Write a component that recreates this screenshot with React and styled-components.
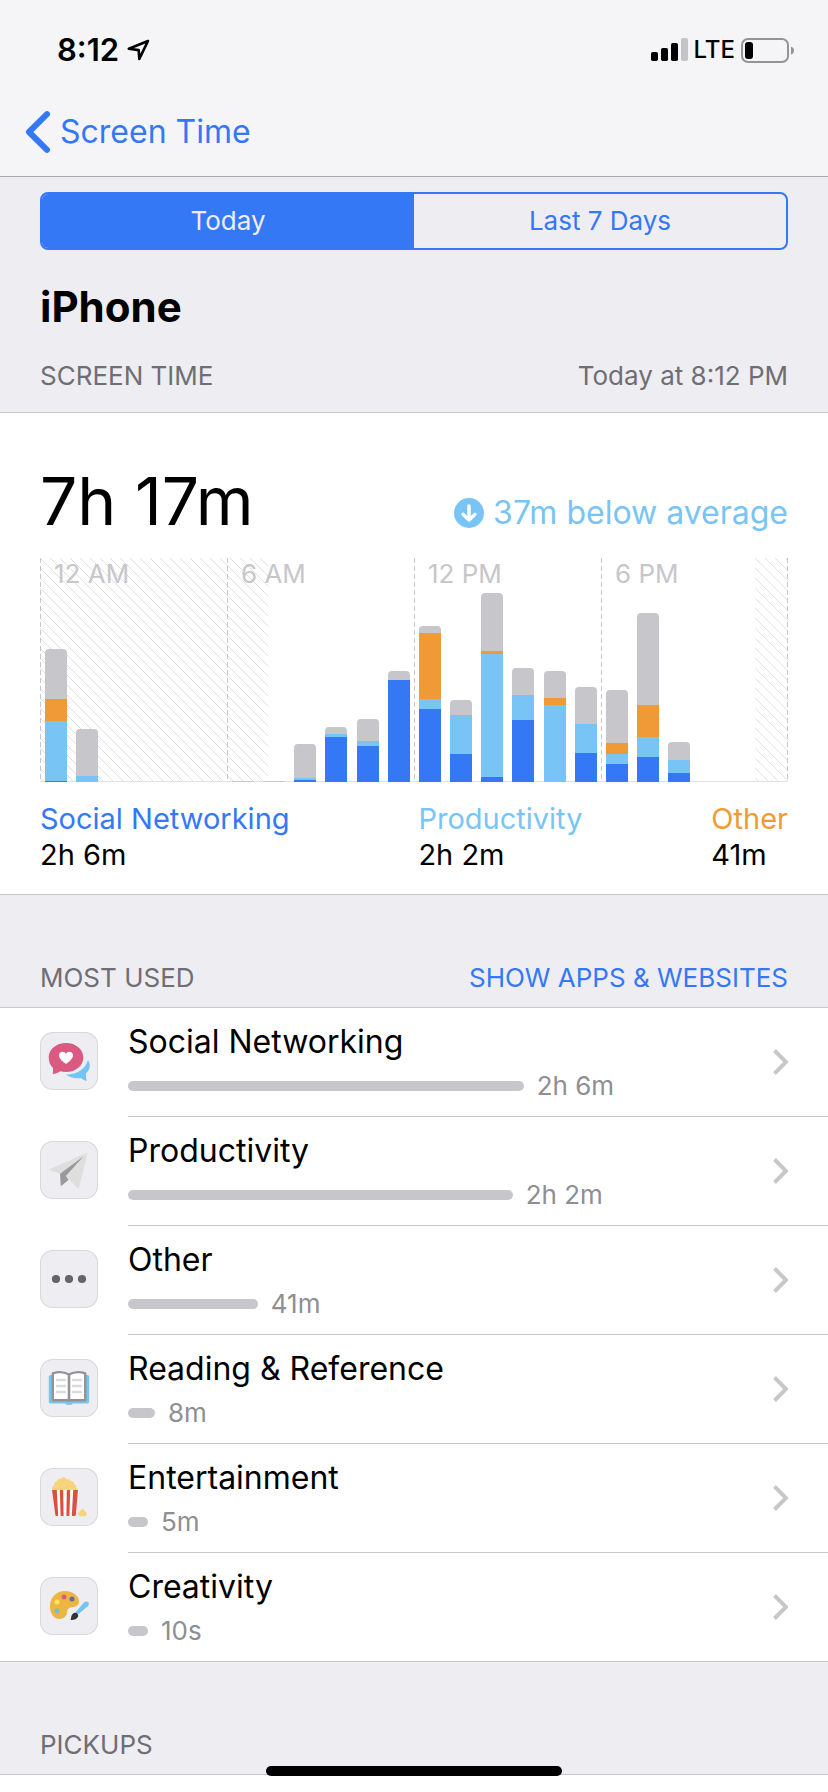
import React, { useState } from "react";
import styled, { createGlobalStyle } from "styled-components";

const color = {
  blue: "#3478f6",
  sky: "#78c5f5",
  orange: "#f09a37",
  gray: "#c7c6cb",
  line: "#c8c7cc",
  group: "#eeedf2",
  label: "#6f6e74",
  detail: "#8e8e93",
};

const GlobalStyle = createGlobalStyle`
  *, *::before, *::after { box-sizing: border-box; }
  body {
    margin: 0;
    background: #fff;
    color: #000;
    font-family: Inter, "Liberation Sans", sans-serif;
    font-size: 26px;
    line-height: 32px;
  }
  h1, h2, p, ul, dl, dd { margin: 0; padding: 0; }
  ul { list-style: none; }
  button { font: inherit; border: 0; background: none; padding: 0; cursor: pointer; }
  a { color: inherit; text-decoration: none; }
  svg { display: block; flex: none; }
`;

const Header = styled.header`
  background: #f5f5f7;
  border-bottom: 1px solid #a9a9ae;
`;

const StatusBar = styled.div`
  display: flex;
  align-items: center;
  justify-content: space-between;
  height: 88px;
  padding: 12px 34px 0 57px;
`;

const StatusGroup = styled.div`
  display: flex;
  align-items: center;
  gap: ${(p) => p.$gap}px;
`;

const Clock = styled.span`
  font-size: 31px;
  font-weight: 600;
`;

const Carrier = styled.span`
  font-size: 24px;
  font-weight: 500;
`;

const NavBar = styled.nav`
  display: flex;
  align-items: center;
  height: 88px;
  padding: 0 25px;
`;

const BackLink = styled.a`
  display: flex;
  align-items: center;
  gap: 9px;
  color: ${color.blue};
  font-size: 32px;
  line-height: 44px;
`;

const Intro = styled.section`
  padding: 15px 40px 20px;
  background: ${color.group};
  border-bottom: 1px solid ${color.line};
`;

const Segmented = styled.div`
  display: grid;
  grid-template-columns: 1fr 1fr;
  height: 58px;
  border: 2px solid ${color.blue};
  border-radius: 8px;
  overflow: hidden;
`;

const Segment = styled.button`
  color: ${(p) => (p.$active ? color.group : color.blue)};
  background: ${(p) => (p.$active ? color.blue : "transparent")};
`;

const DeviceName = styled.h1`
  margin-top: 31px;
  font-size: 42px;
  line-height: 52px;
  font-weight: 700;
`;

const LabelRow = styled.div`
  display: flex;
  justify-content: space-between;
  color: ${color.label};
`;

const IntroLabels = styled(LabelRow)`
  margin-top: 27px;
`;

const GroupHeader = styled(LabelRow)`
  padding: 67px 40px 13px;
  background: ${color.group};
  border-bottom: 1px solid ${color.line};
`;

const Label = styled.h2`
  font-size: 26px;
  font-weight: 400;
  text-transform: uppercase;
`;

const LabelButton = styled.button`
  color: ${color.blue};
  text-transform: uppercase;
`;

const Summary = styled.section`
  padding: 52px 40px 21px;
  border-bottom: 1px solid ${color.line};
`;

const Totals = styled.div`
  display: flex;
  align-items: flex-end;
  justify-content: space-between;
`;

const Total = styled.p`
  font-size: 66px;
  line-height: 72px;
`;

const Average = styled.p`
  display: flex;
  align-items: center;
  gap: 9px;
  color: ${color.sky};
  font-size: 32px;
  line-height: 48px;
`;

const Chart = styled.div`
  display: grid;
  height: 224px;
  margin-top: 21px;
  border-bottom: 1px solid #e2e2e5;

  > * { grid-area: 1 / 1; }
`;

const Hatch = styled.svg`
  width: 100%;
  height: 100%;
`;

const Periods = styled.div`
  display: grid;
  grid-template-columns: repeat(4, 1fr);
`;

const dashes = `repeating-linear-gradient(${color.gray} 0 5px, transparent 5px 8px)`;

const Period = styled.div`
  padding: 0 14px;
  color: ${color.gray};
  background: ${dashes} left / 1px 100% no-repeat;

  &:last-child {
    background: ${dashes} left / 1px 100% no-repeat, ${dashes} right / 1px 100% no-repeat;
  }
`;

const Hours = styled.div`
  display: grid;
  grid-template-columns: repeat(24, 1fr);
  align-items: end;
  margin-bottom: -1px;
`;

const Bar = styled.div`
  width: 22px;
  margin-left: 5px;
  border-radius: 4px 4px 0 0;
  overflow: hidden;
`;

const Part = styled.div`
  background: ${(p) => p.$fill};
`;

const Legend = styled.dl`
  display: flex;
  justify-content: space-between;
  margin-top: 19px;
  font-size: 29px;
  line-height: 36px;
`;

const LegendName = styled.dt`
  color: ${(p) => p.$fill};
`;

const List = styled.ul`
  background: #fff;
  border-bottom: 1px solid ${color.line};
`;

const Row = styled.a`
  display: flex;
  align-items: flex-start;
  gap: 30px;
  padding-left: 40px;
`;

const Tile = styled.span`
  flex: none;
  width: 58px;
  height: 58px;
  margin-top: 24px;
  border-radius: 13px;
  background: ${color.group};
  box-shadow: inset 0 0 0 1px #d9d9dc;
`;

const RowBody = styled.div`
  flex: 1;
  display: flex;
  align-items: center;
  gap: 12px;
  padding: 14px 40px 14px 0;
  border-bottom: 1px solid ${color.line};

  li:last-child & { border-bottom: 0; }
`;

const RowText = styled.div`
  flex: 1;
`;

const RowTitle = styled.div`
  font-size: 32px;
  line-height: 40px;
`;

const Usage = styled.div`
  display: flex;
  align-items: center;
  gap: 13px;
  margin-top: 8px;
  color: ${color.detail};
`;

const UsageBar = styled.span`
  min-width: 20px;
  height: 10px;
  border-radius: 5px;
  background: ${color.gray};
`;

const HomeIndicator = styled.div`
  position: fixed;
  left: 50%;
  bottom: 16px;
  width: 296px;
  height: 10px;
  margin-left: -148px;
  border-radius: 5px;
  background: #000;
`;

const BackChevron = () => (
  <svg width="26" height="42" viewBox="0 0 26 42" fill="none" aria-hidden="true">
    <path d="M22 3.200 4 21l18 17.800" stroke={color.blue} strokeWidth="6" strokeLinecap="round" strokeLinejoin="round" />
  </svg>
);

const RowChevron = () => (
  <svg width="15" height="26" viewBox="0 0 15 26" fill="none" aria-hidden="true">
    <path d="M1.500 1.500 13 13 1.500 24.500" stroke={color.gray} strokeWidth="4" />
  </svg>
);

const LocationArrow = () => (
  <svg width="23" height="22" viewBox="0 0 23 22" fill="none" aria-hidden="true">
    <path d="M21 2 1.800 9.800l9.900 1.300.6 8.800z" stroke="#000" strokeWidth="2.600" strokeLinejoin="round" />
  </svg>
);

const Signal = () => (
  <svg width="37" height="24" viewBox="0 0 37 24" aria-hidden="true">
    <rect x="0" y="14" width="7" height="9" rx="1.800" />
    <rect x="10" y="10" width="7" height="13" rx="1.800" />
    <rect x="20" y="5" width="7" height="18" rx="1.800" />
    <rect x="30" y="0" width="7" height="23" rx="1.800" fill="#c4c4c6" />
  </svg>
);

const Battery = () => (
  <svg width="53" height="25" viewBox="0 0 53 25" aria-hidden="true">
    <rect x="1" y="1" width="46" height="23" rx="6" fill="none" stroke="#949496" strokeWidth="2" />
    <rect x="4" y="4" width="8" height="17" rx="3" />
    <path d="M50 8.500q3 1 3 4t-3 4z" fill="#949496" />
  </svg>
);

const DownBadge = () => (
  <svg width="30" height="30" viewBox="0 0 30 30" fill="none" aria-hidden="true">
    <circle cx="15" cy="15" r="15" fill={color.sky} />
    <path d="M15 8v14M9 16.300l6 5.700 6-5.700" stroke="#fff" strokeWidth="3.400" strokeLinecap="round" strokeLinejoin="round" />
  </svg>
);

const Art = ({ children }) => (
  <svg width="58" height="58" viewBox="0 0 58 58" aria-hidden="true">{children}</svg>
);

const SocialArt = () => (
  <Art>
    <path d="M48 28c3.200 5 2 10-2 13.500-.2 3 .2 5 .7 7.500-2.200-.6-4.200-1.700-5.700-3-6 .9-11.500-.6-15-3.500 11 .2 19.500-5.500 22-14.500z" fill="#74c4f6" />
    <path d="M26 11c9.800 0 17.300 6.200 17.300 14.500S35.800 40 26 40c-2 0-4-.2-5.700-.7-2 1.600-4.700 2.400-7.600 2.700.4-2 .5-4.200.2-6.200-2.700-2.600-4.200-6.200-4.200-10.300C8.700 17.200 16.200 11 26 11z" fill="#db5a82" />
    <path d="M26 32c-3-2.300-7-5-7-8.500 0-4.200 5.200-5 7-1.600 1.800-3.400 7-2.600 7 1.600 0 3.500-4 6.200-7 8.500z" fill="#fff" />
  </Art>
);

const PlaneArt = () => (
  <Art>
    <path d="M47.700 11.300 8.700 28.700l11.500 4.200z" fill="#dededc" />
    <path d="M44.500 14.500 20 32.700l.8 12.600 7.700-6.300-2.500-4z" fill="#999a9c" />
    <path d="M47.700 11.300 26 35.300l12.700 12.700z" fill="#dededc" />
  </Art>
);

const DotsArt = () => (
  <Art>
    <g fill="#656567">
      <circle cx="16" cy="29" r="4.100" />
      <circle cx="29" cy="29" r="4.100" />
      <circle cx="42" cy="29" r="4.100" />
    </g>
  </Art>
);

const BookArt = () => (
  <Art>
    <path d="M10.500 16h37q1.700 0 1.700 1.700v25.100q0 1.700-1.700 1.700H33q-1 1.500-4 1.500t-4-1.500H10.500q-1.700 0-1.700-1.700V17.700q0-1.700 1.700-1.700z" fill="#78c5f0" />
    <path d="M12.800 14.300c5.500-1.800 12-1.200 16.200 1.200 4.200-2.400 10.700-3 16.200-1.200v26.900H12.800z" fill="#fff" stroke="#939395" strokeWidth="2.400" strokeLinejoin="round" />
    <path d="M29 15.500v27" stroke="#939395" strokeWidth="2.600" />
    <path d="M16 21h10M16 27h10M16 33h10M32 21h10M32 27h10M32 33h10" stroke="#dcdcdc" strokeWidth="2.400" />
  </Art>
);

const PopcornArt = () => (
  <Art>
    <path d="M12.300 23c-.8-3 .2-5.200 2-5.800-.2-2.400 1-3.800 2.500-3.800.6-2.200 2-3 3.700-2.400 1.600-2.400 4.800-2.200 5.800.2 2-.6 3.600.3 4 2 2.200-.6 3.900.6 3.900 2.800 1.600.6 2.200 2.300 2 3.600 1.200.8 1.600 2 1.300 3.400z" fill="#f6d47c" />
    <path d="M12 22h26l-2.200 25q-.1 1-1.200 1h-18q-1.100 0-1.300-1z" fill="#fff" />
    <g fill="#dc4f43">
      <path d="M12 22h4.800l1.400 26h-1.600q-1.100 0-1.300-1z" />
      <path d="M19.800 22h3.400l.4 26h-3z" />
      <path d="M26.800 22h3.400l-.8 26h-3z" />
      <path d="M33.200 22H38l-2.200 25q-.1 1-1.200 1h-2.800z" />
    </g>
    <path d="M39.500 48c-2-1.700-1-4.500.7-4.700.2-2.800 4.200-2.800 4.500 0 2 .2 2.800 3 1 4.700-1.800.4-4.400.4-6.200 0z" fill="#f6d47c" />
  </Art>
);

const PaletteArt = () => (
  <Art>
    <path d="M25 14c8.500 0 14.200 5.500 14 10.500-.1 4-3.500 5.600-7 5.700-3.600.2-4.600 2-5 5.300C26.500 39.500 23.500 42 19.500 42 14 42 10 36.500 10 29.500 10 20 16.500 14 25 14z" fill="#edb640" />
    <circle cx="24" cy="20" r="2.500" fill="#dc5b83" />
    <circle cx="32" cy="22" r="2.500" fill="#6b66a8" />
    <circle cx="17" cy="25" r="2.500" fill="#fbe74f" />
    <circle cx="17" cy="33.700" r="2.500" fill="#74bdd8" />
    <path d="M35.300 35.500 43.500 26c1.500-1.700 4-2 4.900-.8.900 1.300.4 3.200-1.200 4.500L38 37.500z" fill="#74c4f0" />
    <path d="M30.700 43c.6-3.600 1-6.400 3.800-7.200 2.300-.5 4.300 1.500 3.600 3.800-.9 2.600-3.800 3.500-7.400 3.400z" fill="#333" />
  </Art>
);

/* Each hour lists its segment heights from the top of the bar down. */
const hour = (other, entertainment, productivity, social) => [
  [other, color.gray],
  [entertainment, color.orange],
  [productivity, color.sky],
  [social, color.blue],
];

const hours = [
  hour(50, 22, 60, 1),
  hour(47, 0, 6, 0),
  hour(0, 0, 0, 0),
  hour(0, 0, 0, 0),
  hour(0, 0, 0, 0),
  hour(0, 0, 0, 0),
  hour(1, 0, 0, 0),
  hour(1, 0, 0, 0),
  hour(34, 0, 2, 2),
  hour(7, 0, 3, 45),
  hour(22, 0, 5, 36),
  hour(9, 0, 0, 102),
  hour(7, 66, 10, 73),
  hour(15, 0, 39, 28),
  hour(58, 3, 123, 5),
  hour(27, 0, 25, 62),
  hour(27, 7, 77, 0),
  hour(37, 0, 29, 29),
  hour(53, 11, 10, 18),
  hour(92, 32, 20, 25),
  hour(18, 0, 13, 9),
];

const legend = [
  { name: "Social Networking", time: "2h 6m", fill: color.blue },
  { name: "Productivity", time: "2h 2m", fill: color.sky },
  { name: "Other", time: "41m", fill: color.orange },
];

const categories = [
  { name: "Social Networking", time: "2h 6m", seconds: 7560, Icon: SocialArt },
  { name: "Productivity", time: "2h 2m", seconds: 7350, Icon: PlaneArt },
  { name: "Other", time: "41m", seconds: 2480, Icon: DotsArt },
  { name: "Reading & Reference", time: "8m", seconds: 515, Icon: BookArt },
  { name: "Entertainment", time: "5m", seconds: 320, Icon: PopcornArt },
  { name: "Creativity", time: "10s", seconds: 10, Icon: PaletteArt },
];

const share = (seconds) => `${(seconds / 7560) * 62.5}%`;

export default function App() {
  const [range, setRange] = useState("Today");

  return (
    <>
      <GlobalStyle />
      <Header>
        <StatusBar>
          <StatusGroup $gap={8}>
            <Clock>8:12</Clock>
            <LocationArrow />
          </StatusGroup>
          <StatusGroup $gap={6}>
            <Signal />
            <Carrier>LTE</Carrier>
            <Battery />
          </StatusGroup>
        </StatusBar>
        <NavBar>
          <BackLink href="#settings">
            <BackChevron />
            Screen Time
          </BackLink>
        </NavBar>
      </Header>

      <main>
        <Intro>
          <Segmented>
            {["Today", "Last 7 Days"].map((name) => (
              <Segment
                key={name}
                type="button"
                $active={range === name}
                aria-pressed={range === name}
                onClick={() => setRange(name)}
              >
                {name}
              </Segment>
            ))}
          </Segmented>
          <DeviceName>iPhone</DeviceName>
          <IntroLabels>
            <Label>Screen Time</Label>
            <span>Today at 8:12 PM</span>
          </IntroLabels>
        </Intro>

        <Summary>
          <Totals>
            <Total>7h 17m</Total>
            <Average>
              <DownBadge />
              37m below average
            </Average>
          </Totals>
          <Chart>
            <Hatch aria-hidden="true">
              <defs>
                <pattern id="downtime" width="10" height="10" patternUnits="userSpaceOnUse">
                  <path d="M-1-1 11 11M-1 9l2 2M9-1l2 2" stroke="#e0e0e3" strokeWidth="1" />
                </pattern>
              </defs>
              <rect width="30.5%" height="100%" fill="url(#downtime)" />
              <svg x="95.6%" width="4.4%" height="100%">
                <rect width="100%" height="100%" fill="url(#downtime)" />
              </svg>
            </Hatch>
            <Periods>
              {["12 AM", "6 AM", "12 PM", "6 PM"].map((name) => (
                <Period key={name}>{name}</Period>
              ))}
            </Periods>
            <Hours>
              {hours.map((parts, i) => (
                <Bar key={i}>
                  {parts.map(([height, fill]) => (
                    <Part key={fill} $fill={fill} style={{ height }} />
                  ))}
                </Bar>
              ))}
            </Hours>
          </Chart>
          <Legend>
            {legend.map((item) => (
              <div key={item.name}>
                <LegendName $fill={item.fill}>{item.name}</LegendName>
                <dd>{item.time}</dd>
              </div>
            ))}
          </Legend>
        </Summary>

        <GroupHeader>
          <Label>Most Used</Label>
          <LabelButton type="button">Show Apps &amp; Websites</LabelButton>
        </GroupHeader>
        <List>
          {categories.map(({ name, time, seconds, Icon }) => (
            <li key={name}>
              <Row href="#category">
                <Tile>
                  <Icon />
                </Tile>
                <RowBody>
                  <RowText>
                    <RowTitle>{name}</RowTitle>
                    <Usage>
                      <UsageBar style={{ width: share(seconds) }} />
                      {time}
                    </Usage>
                  </RowText>
                  <RowChevron />
                </RowBody>
              </Row>
            </li>
          ))}
        </List>

        <GroupHeader>
          <Label>Pickups</Label>
        </GroupHeader>
      </main>
      <HomeIndicator />
    </>
  );
}
